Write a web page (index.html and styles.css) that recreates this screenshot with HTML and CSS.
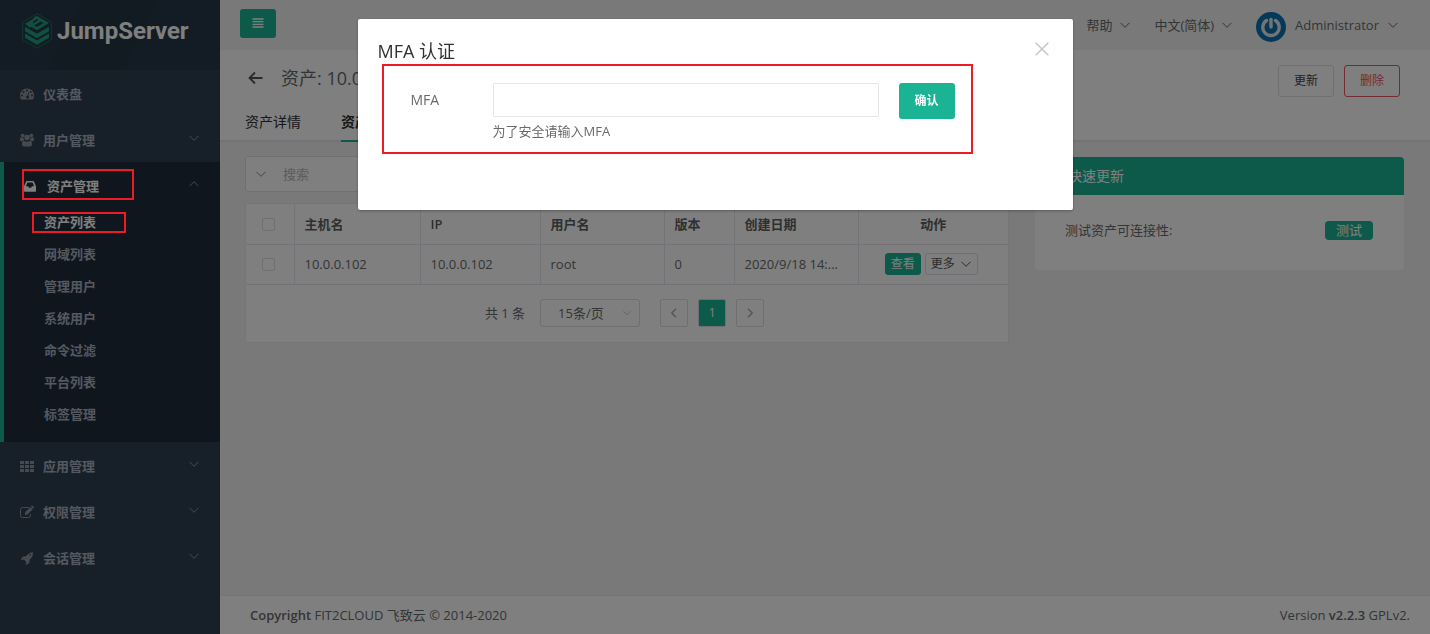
FILE: index.html
```html
<!DOCTYPE html>
<html lang="zh-CN">
<head>
<meta charset="utf-8">
<title>JumpServer</title>
<link rel="stylesheet" href="styles.css">
</head>
<body>
<svg class="sprite" aria-hidden="true">
  <symbol id="down" viewBox="0 0 10 10"><path d="M.5 2.800 5 7.300l4.500-4.500" fill="none" stroke="currentColor"/></symbol>
  <symbol id="up" viewBox="0 0 10 10"><path d="M.5 7.200 5 2.700l4.500 4.500" fill="none" stroke="currentColor"/></symbol>
</svg>
<div class="app">
  <aside class="sidebar">
    <div class="logo">
      <svg class="logo-mark" viewBox="0 0 30 36">
        <path d="M15 .7 29.400 9v17.800L15 35.200.6 26.800V9z" fill="none" stroke="#1a7d62" stroke-width=".8"/>
        <path d="M12.500 3.800 15 2.900l12 7.200-12 7.100-5.600-3.300 2.700-1.600 2.900 1.700 6.600-3.900-2.700-1.700-8 4.700-3 1.600L3 10.700l8.400-5z" fill="#1fa184"/>
        <path d="m11 8.500 4-2.400 1.500.9-5.500 3.200z" fill="#263746"/>
        <path d="M3 13.800l12 7 12-7v4.400l-12 7-12-7z" fill="#1fa184"/>
        <path d="M3 20.400l12 7 12-7v4.400l-12 7-12-7z" fill="#1fa184"/>
      </svg>
      <span class="logo-text">JumpServer</span>
    </div>
    <nav class="menu">
      <a class="item" href="#"><svg class="ico" viewBox="0 0 14 14"><path fill-rule="evenodd" d="M7 1.500a7 7 0 0 0-7 7c0 1.300.4 2.600 1 3.700.1.200.3.300.5.300h11c.2 0 .4-.1.500-.3.700-1.100 1-2.400 1-3.700a7 7 0 0 0-7-7zM2 7.500a1 1 0 1 1 0 2 1 1 0 0 1 0-2zM3.500 4a1 1 0 1 1 0 2 1 1 0 0 1 0-2zM7 2.500a1 1 0 1 1 0 2 1 1 0 0 1 0-2zm1.400 3.100.8.200-.8 3c.6.400.8 1.100.6 1.700-.2.800-1 1.300-1.800 1.100-.8-.2-1.300-1-1.100-1.800.2-.7.700-1.100 1.400-1.200zM10.700 4a1 1 0 1 1 0 2 1 1 0 0 1 0-2zM12 7.500a1 1 0 1 1 0 2 1 1 0 0 1 0-2z"/></svg><span>仪表盘</span></a>
      <a class="item" href="#"><svg class="ico" viewBox="0 0 14 14"><circle cx="2.700" cy="2.600" r="1.900"/><circle cx="11.300" cy="2.600" r="1.900"/><circle cx="7" cy="4.500" r="2.700"/><path d="M0 6c0-1 .4-1.700 1-1.700.4.400 1 .7 1.700.7.300 0 .6 0 .9-.1 0 1 .3 1.700.8 2.300-1 0-1.800.4-2.300 1H1.300C.5 8.200 0 7.700 0 7zM14 6c0-1-.4-1.700-1-1.700-.4.400-1 .7-1.700.7-.3 0-.6 0-.9-.1 0 1-.3 1.700-.8 2.300 1 0 1.800.4 2.300 1h.8c.8 0 1.300-.5 1.300-1.200zM4 7.800c.8.600 1.900 1 3 1s2.200-.4 3-1c1.400 0 2 1.500 2 3.600 0 1.200-.8 2-2 2H4c-1.200 0-2-.8-2-2 0-2.100.6-3.600 2-3.600z"/></svg><span>用户管理</span><svg class="chev"><use href="#down"/></svg></a>
      <div class="group">
        <a class="item" href="#"><svg class="ico" viewBox="0 0 14 14"><path fill-rule="evenodd" d="M2.800 2h6.400c.3 0 .6.200.7.500L12 7.300V12c0 .4-.3.700-.7.700H.7c-.4 0-.7-.3-.7-.7V7.300l2.100-4.800c.1-.3.400-.5.700-.5zm.6 1.500L1.900 7.300h2.200l.8 1.500h2.200l.8-1.500h2.200L8.600 3.500z"/></svg><span>资产管理</span><svg class="chev"><use href="#up"/></svg></a>
        <a class="sub on" href="#">资产列表</a>
        <a class="sub" href="#">网域列表</a>
        <a class="sub" href="#">管理用户</a>
        <a class="sub" href="#">系统用户</a>
        <a class="sub" href="#">命令过滤</a>
        <a class="sub" href="#">平台列表</a>
        <a class="sub" href="#">标签管理</a>
      </div>
      <a class="item" href="#"><svg class="ico" viewBox="0 0 14 14"><path d="M0 2h4v3H0zM5 2h4v3H5zM10 2h4v3h-4zM0 6h4v3H0zM5 6h4v3H5zM10 6h4v3h-4zM0 10h4v3H0zM5 10h4v3H5zM10 10h4v3h-4z"/></svg><span>应用管理</span><svg class="chev"><use href="#down"/></svg></a>
      <a class="item" href="#"><svg class="ico" viewBox="0 0 14 14"><path d="M9 2.500H2.500a2 2 0 0 0-2 2v6a2 2 0 0 0 2 2h6a2 2 0 0 0 2-2V9" fill="none" stroke="currentColor"/><path d="m5 7.400 5.400-5.400 2.300 2.300L7.300 9.700H5zM11 1.400l.6-.6c.3-.3.700-.3 1 0l1.300 1.300c.3.300.3.700 0 1l-.6.600z"/></svg><span>权限管理</span><svg class="chev"><use href="#down"/></svg></a>
      <a class="item" href="#"><svg class="ico" viewBox="0 0 14 14"><path fill-rule="evenodd" d="M13 1.300c.2 3-.7 4.900-3.400 7.500l-.2 3c0 .1 0 .2-.1.200l-3 1.800-.7-.6.700-2.300-2.400-2.400-2.300.7-.6-.6 1.800-3c0-.1.100-.1.200-.1l3-.2C8.400 2.500 10 1.300 13 1.300zM10.300 3a.8.800 0 1 0 0 1.600.8.800 0 0 0 0-1.600z"/></svg><span>会话管理</span><svg class="chev"><use href="#down"/></svg></a>
    </nav>
  </aside>
  <div class="page">
    <header class="topbar">
      <button class="burger" aria-label="菜单"><svg viewBox="0 0 12 10"><path d="M.5 1h11M.5 3.700h11M.5 6.300h11M.5 9h11" stroke="currentColor" stroke-width="1.300"/></svg></button>
      <a class="drop" href="#">帮助<svg><use href="#down"/></svg></a>
      <a class="drop lang" href="#">中文(简体)<svg><use href="#down"/></svg></a>
      <a class="drop user" href="#"><svg class="avatar" viewBox="0 0 30 30"><circle cx="15" cy="15" r="15" fill="#0a73b5"/><path d="M10.500 8.500a8.200 8.200 0 1 0 9 0" fill="none" stroke="#e8e8e8" stroke-width="3.400" stroke-linecap="round"/><path d="M15 7.500V15" stroke="#e8e8e8" stroke-width="3.400" stroke-linecap="round"/></svg>Administrator<svg><use href="#down"/></svg></a>
    </header>
    <section class="heading">
      <div class="title-row">
        <button class="back" aria-label="返回"><svg viewBox="0 0 16 14"><path d="M7 1.500 1.500 7 7 12.500M1.500 7H14.500" fill="none" stroke="currentColor" stroke-width="1.800"/></svg></button>
        <h1>资产: 10.0.0.102</h1>
        <button class="btn">更新</button>
        <button class="btn danger">删除</button>
      </div>
      <nav class="tabs"><a href="#">资产详情</a><a class="current" href="#">资产用户列表</a></nav>
    </section>
    <main class="content">
      <section>
        <label class="search"><svg><use href="#down"/></svg><input type="text" placeholder="搜索" aria-label="搜索"></label>
        <div class="card">
          <table>
            <colgroup><col class="c-check"><col class="c-host"><col class="c-ip"><col class="c-user"><col class="c-ver"><col class="c-date"><col></colgroup>
            <thead><tr><th class="mid"><input type="checkbox" aria-label="全选"></th><th>主机名</th><th>IP</th><th>用户名</th><th>版本</th><th>创建日期</th><th class="mid">动作</th></tr></thead>
            <tbody><tr><td class="mid"><input type="checkbox" aria-label="选择 10.0.0.102"></td><td>10.0.0.102</td><td>10.0.0.102</td><td>root</td><td>0</td><td>2020/9/18 14:...</td><td><div class="actions"><button class="mini primary">查看</button><button class="mini">更多<svg><use href="#down"/></svg></button></div></td></tr></tbody>
          </table>
          <div class="pager">
            <span>共 1 条</span>
            <div class="size"><select aria-label="每页条数"><option>15条/页</option></select><svg><use href="#down"/></svg></div>
            <button aria-label="上一页"><svg viewBox="0 0 10 10"><path d="M7 .8 2.800 5 7 9.200" fill="none" stroke="currentColor" stroke-width="1.500"/></svg></button>
            <button class="num">1</button>
            <button aria-label="下一页"><svg viewBox="0 0 10 10"><path d="M3 .8 7.200 5 3 9.200" fill="none" stroke="currentColor" stroke-width="1.500"/></svg></button>
          </div>
        </div>
      </section>
      <section class="quick">
        <h2>快速更新</h2>
        <div class="quick-row"><span>测试资产可连接性:</span><button>测试</button></div>
      </section>
    </main>
    <footer><span><b>Copyright</b> FIT2CLOUD 飞致云 © 2014-2020</span><span>Version <b>v2.2.3</b> GPLv2.</span></footer>
  </div>
</div>
<div class="overlay">
  <div class="dialog" role="dialog" aria-labelledby="mfa-title">
    <div class="dialog-head"><h2 id="mfa-title">MFA 认证</h2><button class="close" aria-label="关闭"><svg viewBox="0 0 14 14"><path d="m.7.7 12.600 12.600M13.300.7.7 13.300" stroke="currentColor" stroke-width="1.500"/></svg></button></div>
    <form class="mfa">
      <label for="mfa">MFA</label>
      <div class="field"><input id="mfa" type="text"><p>为了安全请输入MFA</p></div>
      <button type="button">确认</button>
    </form>
    <div class="mark mark-form"></div>
  </div>
</div>
<div class="mark mark-menu"></div>
<div class="mark mark-sub"></div>
</body>
</html>
```
FILE: styles.css
```css
* { box-sizing: border-box; }
body, h1, h2, p { margin: 0; }
body {
  font: 13px/20px "Open Sans", "Noto Sans CJK SC", sans-serif;
  color: #676a6c;
  background: #f3f3f4;
}
button, input, select { font: inherit; color: inherit; }
button { padding: 0; border: 0; background: none; }
a { color: inherit; text-decoration: none; }
svg { width: 10px; height: 10px; flex: none; }
.sprite { position: absolute; width: 0; height: 0; }

.app { display: flex; min-height: 100vh; }
.page { flex: 1; min-width: 0; display: flex; flex-direction: column; }

/* sidebar */
.sidebar { width: 220px; background: #2f4050; color: #a7b1c2; font-weight: 600; }
.logo {
  display: flex; align-items: center; gap: 5px;
  height: 70px; padding: 0 0 8px 22px;
  background: linear-gradient(115deg, #273949 0 32%, #253544 32% 62%, #273949 62%);
}
.logo-mark { width: 30px; height: 36px; }
.logo-text { font: bold 24px/36px Roboto, sans-serif; color: #fff; }
.item { display: flex; align-items: center; height: 46px; padding: 2px 21px 0 20px; }
.ico { width: 14px; height: 14px; margin-right: 9px; fill: currentColor; color: #8d949d; }
.chev { margin: 0 0 4px auto; color: #8b959f; }
.group { padding-bottom: 11px; border-left: 4px solid #1ab394; background: #202d3a; }
.group .item { color: #fff; height: 45px; padding-top: 3px; }
.group .ico { color: #fff; }
.sub { display: block; height: 32px; line-height: 31px; padding-left: 40px; }
.sub.on { color: #fff; }

/* top bar */
.topbar { display: flex; align-items: center; height: 50px; padding: 0 32px 0 20px; }
.burger { display: grid; place-items: center; width: 36px; height: 29px; margin: 0 auto 4px 0; border-radius: 3px; background: #1ab394; color: #fff; }
.burger svg { width: 12px; }
.drop { display: flex; align-items: center; gap: 8px; }
.lang { margin-left: 24px; }
.user { margin-left: 24px; gap: 9px; }
.avatar { width: 30px; height: 30px; margin-top: 4px; }

/* page heading */
.heading { background: #fff; border-bottom: 2px solid #e4e7ed; }
.title-row { display: flex; align-items: center; gap: 10px; padding: 0 30px 0 28px; height: 54px; }
.back { display: grid; margin-right: 7px; color: #555; }
.back svg { width: 16px; height: 14px; }
h1 { flex: 1; font-size: 18px; line-height: 24px; font-weight: 400; }
.btn { width: 56px; height: 32px; margin-top: 8px; border: 1px solid #dcdfe6; border-radius: 3px; background: #fff; color: #444; font-size: 12px; }
.btn.danger { border-color: #ed5565; color: #ed5565; }
.title-row .back, h1 { margin-top: 2px; }
.tabs { display: flex; gap: 40px; padding-left: 25px; margin-bottom: -2px; font-size: 14px; line-height: 36px; color: #303133; }
.tabs a { border-bottom: 2px solid transparent; }
.tabs .current { border-color: #1ab394; font-weight: 600; }

/* content */
.content { flex: 1; display: grid; grid-template-columns: 764fr 369fr; align-items: start; gap: 26px; padding: 14px 26px 20px 25px; }
.search { display: flex; align-items: center; gap: 17px; width: 300px; height: 36px; padding-left: 10px; margin-bottom: 11px; border: 1px solid #dcdfe6; border-radius: 3px; background: #fff; color: #888; }
.search input { flex: 1; min-width: 0; border: 0; padding: 0; background: none; }
.search input::placeholder { color: #b4b7bd; }
.card { background: #fff; border: 1px solid #e7eaf0; }
table { width: 100%; table-layout: fixed; border-collapse: collapse; }
.c-check { width: 48px; }
.c-host { width: 126px; }
.c-ip { width: 120px; }
.c-user { width: 124px; }
.c-ver { width: 70px; }
.c-date { width: 124px; }
th, td { height: 40px; padding: 0 10px; border-right: 1px solid #e4e7ed; border-bottom: 1px solid #e4e7ed; text-align: left; white-space: nowrap; }
th:last-child, td:last-child { border-right: 0; }
th { font-weight: 600; color: #5c5f61; }
th.mid, td.mid { text-align: center; }
th:first-child, td:first-child { padding: 0; }
input[type="checkbox"] { appearance: none; width: 13px; height: 13px; margin: 0 2px 2px 0; border: 1px solid #dcdfe6; border-radius: 2px; background: #fff; vertical-align: middle; }
.actions { display: flex; justify-content: center; gap: 4px; margin-right: 4px; }
.mini { display: flex; align-items: center; gap: 6px; height: 22px; padding: 0 6px 0 5px; border: 1px solid #dcdfe6; border-radius: 3px; font-size: 12px; color: #555; }
.mini.primary { padding: 0 5px; border-color: #1ab394; background: #1ab394; color: #fff; }
.pager { display: flex; justify-content: center; align-items: center; height: 57px; }
.size { display: flex; align-items: center; margin: 0 15px; }
.size select { appearance: none; width: 100px; height: 28px; padding: 0 17px; border: 1px solid #dcdfe6; border-radius: 3px; background: #fff; }
.size svg { width: 8px; height: 8px; margin-left: -17px; margin-right: 9px; color: #b4b7bd; pointer-events: none; }
.pager button { display: grid; place-items: center; width: 28px; height: 28px; margin: 0 5px; border: 1px solid #dcdfe6; border-radius: 2px; color: #a9adb5; }
.pager .num { background: #1ab394; color: #fff; font-size: 12px; }

.quick { margin-top: 1px; border-radius: 4px; background: #fff; overflow: hidden; }
.quick h2 { padding: 9px 33px; font-size: 14px; line-height: 20px; font-weight: 400; background: #1ab394; color: #fff; }
.quick-row { display: flex; align-items: center; justify-content: space-between; padding: 25px 31px 30px 30px; }
.quick-row button { width: 48px; height: 19px; line-height: 19px; border-radius: 4px; background: #1ab394; color: #fff; }

footer { display: flex; justify-content: space-between; padding: 9px 20px 9px 30px; border-top: 1px solid #e7eaec; background: #fff; }
footer b { font-weight: 600; }

/* dialog */
.overlay { position: fixed; inset: 0; padding-top: 19px; background: rgba(0, 0, 0, .5); }
.dialog { position: relative; width: 50%; min-height: 191px; margin: 0 auto; padding: 20px; border-radius: 2px; background: #fff; box-shadow: 0 1px 3px rgba(0, 0, 0, .3); }
.dialog-head { display: flex; justify-content: space-between; align-items: center; height: 24px; }
.dialog-head h2 { font-size: 18px; line-height: 24px; font-weight: 400; color: #303133; }
.close { display: grid; margin: 0 4px 4px 0; color: #c4c6ca; }
.close svg { width: 14px; height: 14px; }
.mfa { display: flex; padding: 20px 98px 0 33px; }
.mfa label { width: 82px; font-size: 14px; line-height: 34px; }
.field { flex: 1; margin-right: 20px; }
.field input { display: block; width: 100%; height: 34px; border: 1px solid #e5e6e7; border-radius: 1px; background: #fff; }
.field p { margin-top: 4px; font-size: 13px; line-height: 20px; }
.mfa button { width: 56px; height: 36px; border-radius: 3px; background: #1ab394; color: #fff; font-size: 12px; font-weight: 600; }

/* highlight frames */
.mark { position: absolute; border: 2px solid #ed1c24; pointer-events: none; }
.mark-form { left: 24px; top: 45px; right: 100px; height: 90px; }
.mark-menu { left: 22px; top: 169px; width: 112px; height: 31px; }
.mark-sub { left: 32px; top: 212px; width: 94px; height: 21px; }
```
